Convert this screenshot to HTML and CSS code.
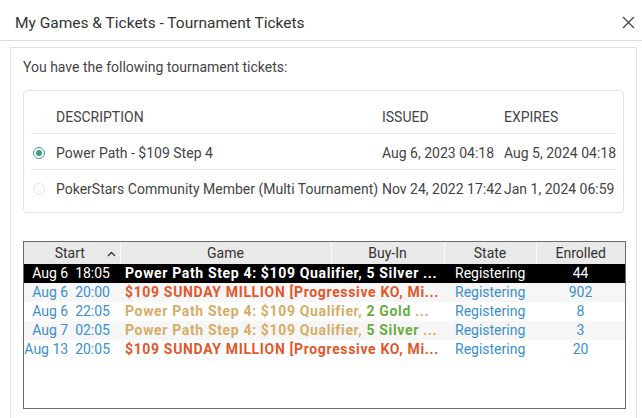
FILE: index.html
```html
<!DOCTYPE html>
<html lang="en">
<head>
  <meta charset="UTF-8" />
  <title>My Games &amp; Tickets - Tournament Tickets</title>
  <link rel="stylesheet" href="styles.css">
</head>
<body>
  <div class="titlebar">
    <span class="title">My Games &amp; Tickets - Tournament Tickets</span>
    <svg class="close" width="13" height="13" viewBox="0 0 13 13">
      <path d="M1 1 L12 12 M12 1 L1 12" stroke="#444" stroke-width="1.2" fill="none"/>
    </svg>
  </div>

  <div class="panel">
    <p class="intro">You have the following tournament tickets:</p>

    <div class="tickets">
      <div class="trow thead">
        <span></span>
        <span>DESCRIPTION</span>
        <span>ISSUED</span>
        <span>EXPIRES</span>
      </div>
      <div class="trow">
        <span class="radio on"></span>
        <span>Power Path - $109 Step 4</span>
        <span>Aug 6, 2023 04:18</span>
        <span>Aug 5, 2024 04:18</span>
      </div>
      <div class="trow last">
        <span class="radio"></span>
        <span>PokerStars Community Member (Multi Tournament)</span>
        <span>Nov 24, 2022 17:42</span>
        <span>Jan 1, 2024 06:59</span>
      </div>
    </div>

    <div class="lobby">
      <table>
        <colgroup>
          <col style="width:96px">
          <col style="width:211px">
          <col style="width:113px">
          <col style="width:92px">
          <col>
        </colgroup>
        <thead>
          <tr>
            <th class="sorted">Start
              <svg class="sort" width="9" height="6" viewBox="0 0 9 6"><path d="M1 5 L4.5 1.5 L8 5" stroke="#333" stroke-width="1.3" fill="none"/></svg>
            </th>
            <th>Game</th>
            <th>Buy-In</th>
            <th>State</th>
            <th>Enrolled</th>
          </tr>
        </thead>
        <tbody>
          <tr class="selected">
            <td class="start">Aug 6&nbsp; 18:05</td>
            <td class="game" colspan="2">Power Path Step 4: $109 Qualifier, 5 Silver ...</td>
            <td class="state">Registering</td>
            <td class="enrolled">44</td>
          </tr>
          <tr>
            <td class="start">Aug 6&nbsp; 20:00</td>
            <td class="game red" colspan="2">$109 SUNDAY MILLION [Progressive KO, Mi...</td>
            <td class="state">Registering</td>
            <td class="enrolled">902</td>
          </tr>
          <tr>
            <td class="start">Aug 6&nbsp; 22:05</td>
            <td class="game tan" colspan="2">Power Path Step 4: $109 Qualifier, <span class="green">2 Gold</span> ...</td>
            <td class="state">Registering</td>
            <td class="enrolled">8</td>
          </tr>
          <tr>
            <td class="start">Aug 7&nbsp; 02:05</td>
            <td class="game tan" colspan="2">Power Path Step 4: $109 Qualifier, <span class="green">5 Silver</span> ...</td>
            <td class="state">Registering</td>
            <td class="enrolled">3</td>
          </tr>
          <tr>
            <td class="start">Aug 13&nbsp; 20:05</td>
            <td class="game red" colspan="2">$109 SUNDAY MILLION [Progressive KO, Mi...</td>
            <td class="state">Registering</td>
            <td class="enrolled">20</td>
          </tr>
        </tbody>
      </table>
    </div>
  </div>
</body>
</html>
```

FILE: styles.css
```css
* {
  box-sizing: border-box;
}

body {
  margin: 0;
  font-family: Roboto, "Liberation Sans", sans-serif;
  color: #333;
  background: #fff;
  height: 418px;
  overflow: hidden;
}

.titlebar {
  height: 41px;
  display: flex;
  align-items: center;
  justify-content: space-between;
  padding: 5px 7px 0 15px;
  border-bottom: 1px solid #dcdcdc;
}

.title {
  font-size: 15.5px;
  color: #333;
}

.close {
  display: block;
}

.panel {
  margin: 6px 5px 0 10px;
  border: 1px solid #e2e2e2;
  border-bottom: none;
  padding: 9px 12px 0 12px;
  height: 400px;
}

.intro {
  margin: 0;
  font-size: 14px;
  line-height: 20px;
  color: #444;
}

.tickets {
  margin-top: 13px;
  border: 1px solid #e2e2e2;
  border-radius: 4px;
  padding: 0 7px 6px 7px;
  font-size: 14px;
  color: #444;
}

.trow {
  display: grid;
  grid-template-columns: 25px 326px 122px 1fr;
  align-items: center;
  height: 36px;
  padding-top: 2px;
  border-bottom: 1px solid #e6e6e6;
  white-space: nowrap;
}

.trow.thead {
  height: 43px;
  padding-top: 9px;
  font-size: 14px;
}

.trow.last {
  border-bottom: none;
}

.radio {
  width: 12px;
  height: 12px;
  border-radius: 50%;
  border: 1px solid #e4e4e4;
  margin-left: 2px;
  position: relative;
}

.radio.on {
  border-color: #3a9e8c;
}

.radio.on::after {
  content: "";
  position: absolute;
  left: 2px;
  top: 2px;
  width: 6px;
  height: 6px;
  border-radius: 50%;
  background: #3a9e8c;
}

.lobby {
  margin-top: 28px;
  width: 603px;
  height: 168px;
  border: 1px solid #6a6a6a;
  background: #fff;
}

table {
  width: 100%;
  border-collapse: collapse;
  table-layout: fixed;
  font-size: 14px;
}

th {
  height: 22px;
  padding: 0;
  font-weight: normal;
  color: #333;
  background: #e9e9e9;
  border-left: 1px solid #fafafa;
  text-align: center;
  line-height: 22px;
}

th:first-child {
  border-left: none;
}

th.sorted {
  position: relative;
  padding-right: 4px;
}

.sort {
  position: absolute;
  right: 4px;
  top: 9px;
}

td {
  height: 19px;
  padding: 0;
  line-height: 19px;
  white-space: nowrap;
  overflow: hidden;
}

tbody tr:nth-child(even) {
  background: #f6f6f6;
}

.start {
  text-align: right;
  padding-right: 10px;
  color: #3b8fcf;
}

.game {
  padding-left: 5px;
  font-weight: bold;
  font-size: 14px;
  letter-spacing: 0.65px;
}

.state {
  padding-left: 11px;
  color: #3b8fcf;
}

.enrolled {
  text-align: center;
  color: #3b8fcf;
}

.red {
  color: #e0582b;
}

.tan {
  color: #d5ad66;
}

.green {
  color: #6aac3e;
}

tr.selected td {
  background: #000;
  color: #fff;
}
```
